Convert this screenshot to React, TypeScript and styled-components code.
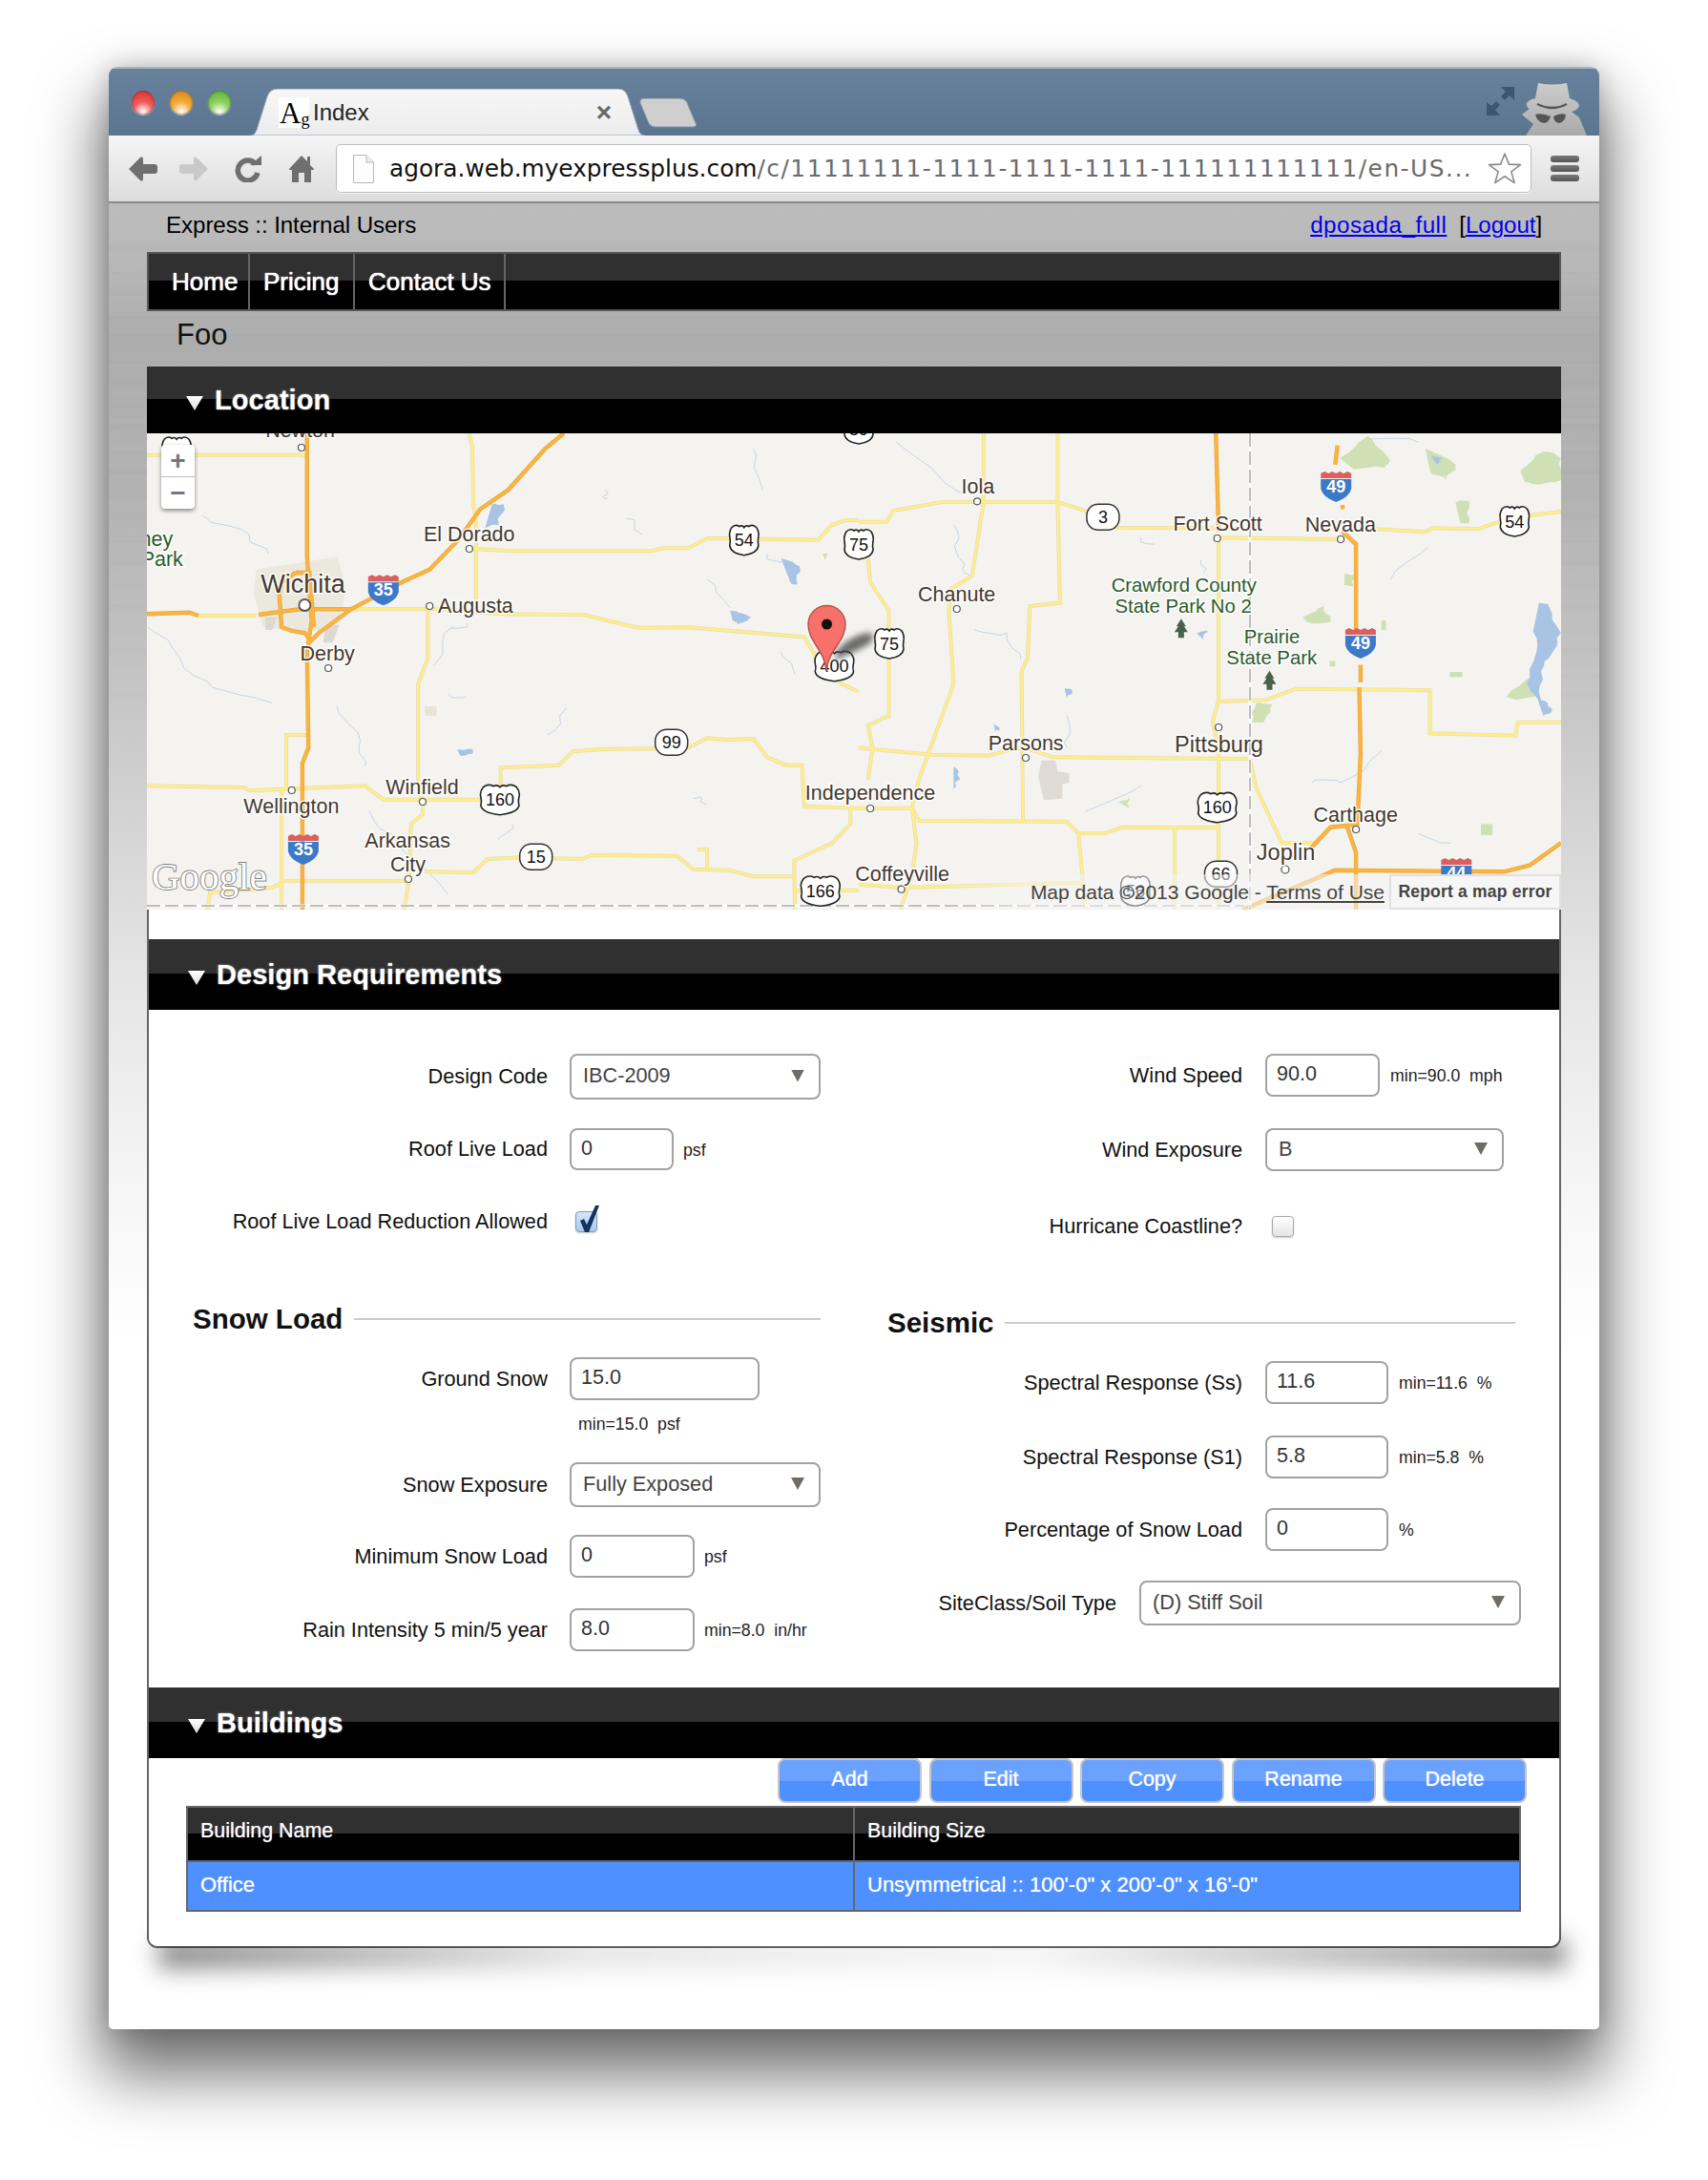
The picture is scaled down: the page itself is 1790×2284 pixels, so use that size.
import React from "react";
import styled, { createGlobalStyle } from "styled-components";

const Global = createGlobalStyle`
  html, body { margin: 0; padding: 0; background: #fff; }
  body { font-family: "Liberation Sans", Arial, sans-serif; color: #000; }
  * { box-sizing: border-box; }
`;

const Page = styled.div`
  width: 1790px;
  height: 2284px;
  padding: 70px 114px 0;
  overflow: hidden;
`;

const Window = styled.div`
  width: 1562px;
  height: 2056px;
  border-radius: 9px 9px 5px 5px;
  box-shadow: 0 40px 66px 8px rgba(0, 0, 0, 0.56), 0 0 26px rgba(0, 0, 0, 0.2);
  background: #fff;
  overflow: hidden;
  display: flex;
  flex-direction: column;
`;

const TitleBar = styled.div`
  height: 72px;
  flex: none;
  display: flex;
  align-items: flex-start;
  background: linear-gradient(#a9b4c0 0 2px, #68829e 2px, #5b7591);
  position: relative;
`;

const Lights = styled.div`
  display: flex;
  gap: 16px;
  padding: 25px 0 0 24px;
`;

const Light = styled.span<{ $c: string; $d: string }>`
  width: 24px;
  height: 25px;
  border-radius: 50%;
  background: radial-gradient(circle at 50% 88%, #fff 0, ${(p) => p.$c} 42%, ${(p) => p.$d} 100%);
  box-shadow: 0 1px 1px rgba(255, 255, 255, 0.5), inset 0 0 2px rgba(0, 0, 0, 0.5);
`;

const Tab = styled.div`
  position: relative;
  width: 413px;
  height: 49px;
  margin: 23px 0 0 21px;
  flex: none;
  display: flex;
  align-items: center;
  padding: 0 35px 0 29px;
  font-size: 24px;
`;

const TabShape = styled.svg`
  position: absolute;
  left: 0;
  top: 0;
  width: 413px;
  height: 49px;
`;

const Favicon = styled.span`
  position: relative;
  width: 32px;
  height: 32px;
  background: #fff;
  margin-right: 4px;
  display: flex;
  align-items: flex-end;
  font-family: "Liberation Serif", serif;
  font-size: 31px;
  line-height: 30px;
  padding-left: 1px;
`;

const FaviconSub = styled.span`
  font-size: 18px;
  line-height: 18px;
`;

const TabTitle = styled.span`
  position: relative;
  flex: 1;
  color: #222;
`;

const TabClose = styled.span`
  position: relative;
  color: #666;
  font-size: 28px;
  font-weight: 700;
`;

const NewTab = styled.svg`
  width: 63px;
  height: 31px;
  margin: 33px 0 0 -7px;
  flex: none;
`;

const TitleIcons = styled.div`
  margin-left: auto;
  display: flex;
  align-items: flex-start;
  padding: 17px 11px 0 0;
  gap: 8px;
`;

const ExpandIcon = styled.svg`
  margin-top: 4px;
`;

const Toolbar = styled.div`
  height: 71px;
  flex: none;
  display: flex;
  align-items: center;
  background: linear-gradient(#f5f5f5, #dcdcdc);
  border-bottom: 2px solid #8a8a8a;
`;

const NavIcon = styled.svg<{ $ml: number }>`
  margin-left: ${(p) => p.$ml}px;
  flex: none;
`;

const Omnibox = styled.div`
  margin-left: 23px;
  width: 1253px;
  height: 51px;
  background: #fff;
  border: 1px solid #bdbdbd;
  border-radius: 5px;
  display: flex;
  align-items: center;
  padding: 0 9px 0 17px;
  box-shadow: 0 1px 0 rgba(255, 255, 255, 0.7);
`;

const UrlText = styled.span`
  margin-left: 16px;
  flex: 1;
  white-space: nowrap;
  font-family: "DejaVu Sans", sans-serif;
  font-size: 24.8px;
  color: #111;
`;

const UrlRest = styled.span`
  color: #6b6b6b;
  letter-spacing: 1.52px;
`;

const MenuButton = styled.div`
  margin-left: 20px;
  width: 30px;
  display: flex;
  flex-direction: column;
  gap: 3px;
`;

const MenuBar = styled.span`
  height: 7px;
  border-radius: 3px;
  background: linear-gradient(#7b7b7b, #555);
`;

const Metal = styled.div`
  flex: 1;
  padding: 0 40px;
  display: flex;
  flex-direction: column;
  background:
    repeating-linear-gradient(0deg, rgba(255, 255, 255, 0.02) 0 4px, transparent 4px 13px, rgba(255, 255, 255, 0.012) 13px 15px, transparent 15px 29px) 0 0 / 100% 520px no-repeat,
    repeating-linear-gradient(0deg, rgba(0, 0, 0, 0.012) 0 7px, transparent 7px 23px, rgba(0, 0, 0, 0.01) 23px 26px, transparent 26px 47px) 0 0 / 100% 520px no-repeat,
    linear-gradient(#bcbcbc 0, #b8b8b8 60px, #adadad 140px, #b2b2b2 300px, #c6c6c6 520px, #e4e4e4 800px, #f7f7f7 1050px, #fff 1200px);
`;

const TopRow = styled.div`
  height: 51px;
  padding: 0 20px 5px 20px;
  display: flex;
  justify-content: space-between;
  align-items: center;
  font-size: 24.2px;
  letter-spacing: -0.1px;
`;

const UserLinks = styled.div`
  display: flex;
  gap: 13px;
`;

const Link = styled.a<{ $spread?: boolean }>`
  color: #0000ee;
  text-decoration: underline;
  letter-spacing: ${(p) => (p.$spread ? "0.5px" : "inherit")};
`;

const NavBar = styled.nav`
  height: 62px;
  border: 2px solid #555;
  display: flex;
  background: linear-gradient(#303030 0 28px, #000 28px);
`;

const NavItem = styled.a<{ $w: number; $pl: number }>`
  width: ${(p) => p.$w}px;
  padding-left: ${(p) => p.$pl}px;
  border-right: 2px solid #666;
  color: #fff;
  font-size: 26px;
  display: flex;
  align-items: center;
  text-shadow: 0 0 1px #fff, 0 0 1px #fff;
`;

const PageTitle = styled.h1`
  height: 58px;
  margin: 0;
  padding: 0 0 8px 31px;
  display: flex;
  align-items: center;
  font-size: 31px;
  font-weight: 400;
  color: #111;
`;

const SectionHeader = styled.div<{ $split: number; $h: number; $pad: number }>`
  height: ${(p) => p.$h}px;
  flex: none;
  display: flex;
  align-items: center;
  padding: 0 0 0 ${(p) => p.$pad}px;
  gap: 12px;
  background: linear-gradient(#303030 0 ${(p) => p.$split}px, #000 ${(p) => p.$split}px);
  color: #fff;
  font-size: 29px;
  font-weight: 700;
  letter-spacing: 0.05px;
  text-shadow: 0 0 2px rgba(255, 255, 255, 0.7);
`;

const Triangle = styled.span`
  width: 18px;
  height: 15px;
  margin-top: 7px;
  background: linear-gradient(#fff, #ddd);
  clip-path: polygon(0 0, 100% 0, 50% 100%);
`;

const MapFrame = styled.div`
  position: relative;
  height: 499px;
  flex: none;
  overflow: hidden;
  background: #f4f3ef;
`;

const MapSvg = styled.svg`
  display: block;
`;

const MapLabel = styled.text<{ $park?: boolean; $size?: number }>`
  font-family: "Liberation Sans", Arial, sans-serif;
  font-size: ${(p) => p.$size || 21.5}px;
  fill: ${(p) => (p.$park ? "#2c5a2e" : "#45392f")};
  stroke: rgba(255, 255, 255, 0.85);
  stroke-width: 3px;
  paint-order: stroke;
`;

const ShieldText = styled.text<{ $c?: string; $b?: boolean }>`
  font-family: "Liberation Sans", Arial, sans-serif;
  font-size: 18px;
  font-weight: ${(p) => (p.$b ? 700 : 400)};
  fill: ${(p) => p.$c || "#111"};
  text-anchor: middle;
`;

const GoogleMark = styled.text`
  font-family: "Liberation Serif", serif;
  font-size: 41px;
  fill: #fff;
  stroke: #808080;
  stroke-width: 1.8px;
  paint-order: stroke;
`;

const ZoomControl = styled.div`
  position: absolute;
  left: 15px;
  top: 12px;
  width: 35px;
  height: 67px;
  background: #fff;
  border-radius: 4px;
  box-shadow: 0 2px 4px rgba(0, 0, 0, 0.45);
  display: flex;
  flex-direction: column;
  color: #777;
  font-size: 28px;
  font-weight: 700;
`;

const ZoomKey = styled.span<{ $top?: boolean }>`
  flex: 1;
  display: flex;
  align-items: center;
  justify-content: center;
  line-height: 1;
  border-bottom: ${(p) => (p.$top ? "1px solid #bbb" : "none")};
`;

const Attribution = styled.div`
  position: absolute;
  right: 0;
  bottom: 0;
  height: 37px;
  width: 640px;
  display: flex;
  justify-content: flex-end;
  align-items: center;
  background: linear-gradient(90deg, rgba(245, 245, 245, 0), rgba(245, 245, 245, 0.55) 12%);
  font-size: 21px;
  color: #444;
`;

const TermsLink = styled.span`
  text-decoration: underline;
`;

const ReportBox = styled.div`
  margin-left: 5px;
  width: 180px;
  height: 37px;
  display: flex;
  align-items: center;
  justify-content: center;
  background: #f6f6f6;
  border: 2px solid #e0e0e0;
  font-size: 17.5px;
  font-weight: 700;
  letter-spacing: 0.2px;
  color: #444;
`;

const Panel = styled.section`
  position: relative;
  height: 1088px;
  flex: none;
  padding-top: 31px;
  background: #fff;
  border: 2px solid #666;
  border-top: none;
  border-radius: 0 0 11px 11px;
  display: flex;
  flex-direction: column;

  &::after {
    content: "";
    position: absolute;
    left: 10px;
    right: -8px;
    bottom: -24px;
    height: 32px;
    z-index: 0;
    filter: blur(12px);
    background: linear-gradient(90deg, rgba(0, 0, 0, 0.46), rgba(0, 0, 0, 0.1) 30%, rgba(0, 0, 0, 0.04) 62%, rgba(0, 0, 0, 0.42));
  }
`;

const PanelInner = styled.div`
  position: relative;
  z-index: 1;
  flex: 1;
  display: flex;
  flex-direction: column;
  background: #fff;
  border-radius: 0 0 9px 9px;
`;

const FormGrid = styled.div`
  height: 710px;
  flex: none;
  display: grid;
  grid-template-columns: 734px 1fr;
  font-size: 21.7px;
`;

const FormColumn = styled.div`
  padding-top: 46px;
  display: flex;
  flex-direction: column;
`;

const FieldRow = styled.div<{ $mt?: number; $labelW: number; $gap?: number; $h?: number }>`
  margin-top: ${(p) => p.$mt || 0}px;
  min-height: ${(p) => p.$h || 44}px;
  display: grid;
  grid-template-columns: ${(p) => p.$labelW}px auto 1fr;
  column-gap: ${(p) => p.$gap || 24}px;
  align-items: center;
`;

const FieldLabel = styled.label`
  text-align: right;
  white-space: nowrap;
  color: #111;
`;

const TextInput = styled.input<{ $w: number; $h?: number }>`
  width: ${(p) => p.$w}px;
  height: ${(p) => p.$h || 45}px;
  padding: 0 0 2px 10px;
  border: 2px solid #a2a2a2;
  border-radius: 8px;
  background: #fff;
  font-family: inherit;
  font-size: 21.5px;
  color: #333;
  outline: none;
`;

const SelectBox = styled.div<{ $w: number; $h?: number }>`
  width: ${(p) => p.$w}px;
  height: ${(p) => p.$h || 47}px;
  padding: 0 15px 2px 12px;
  border: 2px solid #a2a2a2;
  border-radius: 8px;
  display: flex;
  justify-content: space-between;
  align-items: center;
  color: #444;
`;

const SelectArrow = styled.span`
  width: 14px;
  height: 13px;
  background: #716b66;
  clip-path: polygon(0 0, 100% 0, 50% 100%);
`;

const Unit = styled.span`
  margin: 2px 0 0 -13px;
  font-size: 17.7px;
  white-space: pre;
  color: #222;
`;

const Hint = styled.div`
  margin: 13px 0 0 450px;
  height: 24px;
  line-height: 24px;
  font-size: 17.7px;
  white-space: pre;
  color: #222;
`;

const CheckBoxWrap = styled.span<{ $ml: number }>`
  position: relative;
  display: block;
  margin-left: ${(p) => p.$ml}px;
  width: 23px;
  height: 22px;
  border-radius: 4px;
  border: 1px solid #a8a8a8;
  background: linear-gradient(#fff, #e4e4e4);
  box-shadow: 0 1px 2px rgba(0, 0, 0, 0.2);
`;

const CheckedBox = styled(CheckBoxWrap)`
  border-color: #7f98b8;
  background: linear-gradient(#d6e6f8, #a9c9ee);
`;

const CheckMark = styled.svg`
  position: absolute;
  left: 1px;
  top: -8px;
`;

const GroupHeading = styled.div<{ $mt: number; $pl: number; $end: number; $gap: number }>`
  margin-top: ${(p) => p.$mt}px;
  height: 40px;
  padding-left: ${(p) => p.$pl}px;
  width: ${(p) => p.$end}px;
  display: flex;
  align-items: center;
  gap: ${(p) => p.$gap}px;
  font-size: 29.5px;
  font-weight: 700;
  color: #111;
`;

const HeadingRule = styled.span`
  flex: 1;
  height: 2px;
  background: #cbcbcb;
`;

const Actions = styled.div`
  height: 47px;
  flex: none;
  padding-right: 34px;
  display: flex;
  justify-content: flex-end;
  gap: 7.5px;
`;

const ActionButton = styled.button`
  width: 151px;
  height: 47px;
  padding: 0 0 3px;
  border: 2px solid #c6c6c6;
  border-radius: 8px;
  background: linear-gradient(#6ca2ff 0 22px, #4e90ff 22px);
  color: #fff;
  font-family: inherit;
  font-size: 21.5px;
  text-shadow: 0 0 1px rgba(255, 255, 255, 0.8);
`;

const Table = styled.table`
  margin: 3px 0 0 39px;
  width: 1399px;
  border-collapse: collapse;
  table-layout: fixed;
  font-size: 21.4px;
  color: #fff;
  text-shadow: 0 0 1px rgba(255, 255, 255, 0.7);
`;

const HeadCell = styled.th<{ $w?: number }>`
  width: ${(p) => (p.$w ? `${p.$w}px` : "auto")};
  height: 57px;
  padding: 0 0 6px 13px;
  border: 2px solid #666;
  text-align: left;
  font-weight: 400;
  background: linear-gradient(#303030 0 27px, #000 27px);
`;

const BodyCell = styled.td`
  height: 52px;
  padding: 0 0 3px 13px;
  border: 2px solid #666;
  background: #4e90ff;
  font-size: 22px;
`;

type Conv = (x: number, y: number) => [number, number];
const z3: Conv = (x, y) => [x / 2.063 - 14, y / 3 - 4];
const z4: Conv = (x, y) => [746 + x / 2.063, y / 3 - 4];
const pts = (fn: Conv, s: string) =>
  s
    .split(" ")
    .map((p) => {
      const [x, y] = p.split(",").map(Number);
      const [a, b] = fn(x, y);
      return `${a.toFixed(1)},${b.toFixed(1)}`;
    })
    .join(" ");

// rivers and lake shores are irregular, so break straight segments up a bit
const wiggle = (s: string, amp: number) => {
  const p = s.split(" ").map((q) => q.split(",").map(Number));
  const out: string[] = [];
  p.forEach(([x, y], i) => {
    out.push(`${x},${y}`);
    const next = p[i + 1];
    if (!next) return;
    [0.25, 0.5, 0.75].forEach((t) => {
      const dx = Math.sin(i * 7.3 + t * 19 + x) * amp;
      const dy = Math.cos(i * 3.1 + t * 23 + y) * amp;
      out.push(`${(x + (next[0] - x) * t + dx).toFixed(1)},${(y + (next[1] - y) * t + dy).toFixed(1)}`);
    });
  });
  return out.join(" ");
};
const riv = (fn: Conv, s: string) => pts(fn, wiggle(s, 9));
const shore = (fn: Conv, s: string) => pts(fn, wiggle(s, 5));

const yellowRoads = [
  pts(z3, "29,80 360,80 375,85"),
  pts(z3, "725,12 732,50 735,240 740,280 740,560"),
  pts(z3, "735,375 820,382 1120,382 1145,373 1200,373 1240,342 1480,347 1510,300 1540,285 1568,285"),
  pts(z3, "470,565 640,563 800,580 975,583 1090,623 1200,622 1450,652 1490,750 1525,795 1568,825"),
  pts(z3, "140,585 265,585"),
  pts(z3, "636,565 636,720 615,800 615,1100 625,1170 625,1210 600,1240 595,1420 585,1510"),
  pts(z3, "29,1120 240,1125 250,1135 500,1120 540,1163 750,1163"),
  pts(z3, "795,1163 793,1063 920,1055 950,1012 1010,1005 1130,1003 1200,1000 1240,970 1280,975 1340,972 1370,1030 1410,1055 1445,1055 1450,1185 1568,1190"),
  pts(z3, "330,1130 330,960 375,960"),
  pts(z3, "320,1130 320,1510"),
  pts(z3, "320,1418 590,1418"),
  pts(z3, "160,1510 165,1455 300,1440 320,1425"),
  pts(z3, "630,1390 735,1392 765,1350 840,1345 905,1348 970,1350 990,1338 1175,1340 1210,1382 1290,1385 1340,1405 1425,1405"),
  pts(z3, "1220,1320 1240,1320 1240,1382"),
  pts(z3, "1430,1510 1428,1355 1510,1300 1550,1240 1550,1190"),
  pts(z3, "1430,1450 1568,1448"),
  pts(z4, "0,290 60,290 75,255 180,228 430,228 490,255 560,308 775,310"),
  pts(z4, "775,340 1040,345"),
  pts(z4, "1110,312 1225,322 1240,310 1340,312 1385,290 1450,270 1518,258"),
  pts(z4, "270,12 270,230 265,270 245,460 200,500 195,570 205,800 130,1100 115,1190 125,1300 115,1400 90,1510"),
  pts(z4, "430,12 430,230 435,545 370,555 365,720 352,760 355,1230"),
  pts(z4, "778,340 778,850 765,920 778,1000 778,1510"),
  pts(z4, "780,855 880,850 945,815 1170,818 1235,820 1235,955 1420,962 1425,920 1518,920"),
  pts(z4, "0,1000 30,1005 160,1022 280,1025 330,1005 360,1000 420,1030 845,1035"),
  pts(z4, "845,1035 860,1130 915,1300 985,1300"),
  pts(z4, "0,1190 115,1190 130,1230 450,1232 475,1270 530,1270 570,1250 775,1252"),
  pts(z4, "475,1270 490,1510"),
  pts(z4, "683,1252 683,1510"),
  pts(z4, "20,405 25,480 65,570 65,900 20,930 30,1000 20,1100"),
  pts(z4, "0,1430 90,1440 480,1425"),
];

const orangeRoads = [
  pts(z3, "375,12 375,400 385,600 375,700 378,1000 365,1050 365,1510"),
  pts(z3, "930,12 890,60 810,190 750,250 700,350 640,440 580,480 470,565 400,640 380,670"),
  pts(z3, "29,580 120,575 140,585"),
  pts(z3, "270,582 360,565 470,565"),
  pts(z3, "350,450 320,480 315,520 320,620 340,632 370,640 385,665"),
  pts(z3, "350,450 380,450 390,620"),
  pts(z4, "772,12 778,320"),
  pts(z4, "1035,50 1030,110"),
  pts(z4, "1045,238 1047,250"),
  pts(z4, "1045,320 1075,360 1075,630"),
  pts(z4, "1085,740 1085,795"),
  pts(z4, "1082,810 1085,1020 1078,1240 1055,1245 1075,1330 1075,1510"),
  pts(z4, "975,1320 1020,1250 1055,1245"),
  pts(z4, "830,1510 1030,1385 1395,1390 1450,1370 1518,1300"),
];

const rivers = [
  riv(z3, "150,270 250,330 290,390"),
  riv(z3, "30,620 100,720 170,810 300,860"),
  riv(z3, "440,870 490,980 500,1060"),
  riv(z3, "935,875 895,960"),
  riv(z3, "1020,190 1024,215"),
  riv(z3, "1340,60 1360,190"),
  riv(z3, "1065,280 1100,330"),
  riv(z3, "1240,470 1290,560"),
  riv(z3, "1370,390 1400,420"),
  riv(z3, "650,740 690,620 720,610"),
  riv(z3, "510,1200 570,1300 680,1460"),
  riv(z3, "820,1240 790,1290"),
  riv(z3, "1210,1160 1240,1180"),
  riv(z3, "1400,700 1430,770"),
  riv(z3, "680,830 720,840"),
  riv(z4, "80,40 220,200"),
  riv(z4, "205,300 215,400 245,460"),
  riv(z4, "250,630 320,640 350,720"),
  riv(z4, "610,340 640,360"),
  riv(z4, "740,410 745,450"),
  riv(z4, "450,900 450,1000"),
  riv(z4, "490,1200 610,1120"),
  riv(z4, "980,1110 1040,1110 1130,1010"),
  riv(z4, "1150,470 1230,370"),
  riv(z4, "1100,30 1210,40"),
  riv(z4, "1210,1270 1280,1300"),
];

const lakes = [
  shore(z3, "775,235 800,235 790,300 760,310"),
  shore(z3, "1400,405 1440,430 1435,485 1420,480"),
  shore(z3, "1290,570 1335,590 1310,610 1295,600"),
  shore(z3, "700,1005 740,1005 725,1020 705,1022"),
  shore(z4, "1470,550 1490,550 1518,640 1500,700 1475,760 1475,850 1500,880 1480,900 1445,800 1465,700 1460,620"),
  shore(z4, "205,1060 220,1100 205,1130"),
  shore(z4, "290,910 305,950 295,950"),
  shore(z4, "730,640 755,635 745,660"),
  shore(z4, "445,815 462,825 450,845"),
  shore(z4, "1232,70 1262,90 1250,110"),
];

const greens = [
  shore(z4, "1040,90 1100,20 1145,90 1140,120 1070,125"),
  shore(z4, "1225,60 1290,110 1270,160 1235,130"),
  shore(z4, "1290,230 1320,225 1320,290 1300,290"),
  shore(z4, "1430,130 1480,70 1518,90 1518,160 1480,170 1440,165"),
  shore(z4, "960,590 1005,555 1020,605 970,605"),
  shore(z4, "1050,455 1070,455 1070,490 1050,490"),
  shore(z4, "850,920 860,860 895,860 875,920"),
  pts(z4, "1278,762 1305,762 1305,778 1278,778"),
  pts(z4, "1345,1240 1370,1240 1370,1275 1345,1275"),
  shore(z4, "1400,840 1450,780 1470,830 1420,850"),
  shore(z4, "560,1170 585,1155 585,1190"),
  pts(z4, "1130,600 1140,600 1140,630 1130,630"),
  pts(z4, "1018,728 1030,728 1030,745 1018,745"),
  pts(z3, "1490,390 1500,390 1495,410"),
];

const urban = [
  { p: pts(z3, "265,440 440,400 460,500 440,620 360,640 280,620 260,520"), c: "#ebe8dd" },
  { p: pts(z3, "285,590 310,590 300,630 285,630"), c: "#dcd9d2" },
  { p: pts(z3, "415,615 445,615 430,670 410,670"), c: "#dcd9d2" },
  { p: pts(z3, "630,870 655,870 655,900 630,900"), c: "#e8e3d6" },
  { p: pts(z4, "395,1040 425,1040 430,1075 455,1080 455,1110 440,1115 440,1160 400,1165 388,1090"), c: "#dfdad4" },
];

const dots: [Conv, number, number, number][] = [
  [z3, 363, 57, 3.5], [z3, 726, 375, 3.5], [z3, 640, 555, 3.5], [z3, 370, 552, 6], [z3, 421, 750, 3.5],
  [z3, 342, 1134, 3.5], [z3, 625, 1170, 3.5], [z3, 594, 1413, 3.5], [z4, 256, 226, 3.5], [z4, 775, 342, 3.5],
  [z4, 1042, 345, 3.5], [z4, 212, 564, 3.5], [z4, 778, 936, 3.5], [z4, 361, 1032, 3.5], [z4, 25, 1191, 3.5],
  [z4, 1075, 1257, 3.5], [z4, 922, 1383, 4], [z4, 92, 1445, 3.5],
];

const labels: { f: Conv; x: number; y: number; t: string; park?: boolean; size?: number; end?: boolean }[] = [
  { f: z3, x: 285, y: 25, t: "Newton" },
  { f: z3, x: 85, y: 365, t: "ney", park: true, end: true },
  { f: z3, x: 107, y: 430, t: "Park", park: true, end: true },
  { f: z3, x: 627, y: 350, t: "El Dorado" },
  { f: z3, x: 275, y: 512, t: "Wichita", size: 27 },
  { f: z3, x: 658, y: 577, t: "Augusta" },
  { f: z3, x: 360, y: 725, t: "Derby" },
  { f: z3, x: 545, y: 1145, t: "Winfield" },
  { f: z3, x: 238, y: 1205, t: "Wellington" },
  { f: z3, x: 500, y: 1315, t: "Arkansas" },
  { f: z3, x: 555, y: 1390, t: "City" },
  { f: z3, x: 1452, y: 1165, t: "Independence" },
  { f: z4, x: 196, y: 1420, t: "Coffeyville", end: true },
  { f: z4, x: 222, y: 200, t: "Iola" },
  { f: z4, x: 680, y: 317, t: "Fort Scott" },
  { f: z4, x: 965, y: 320, t: "Nevada" },
  { f: z4, x: 128, y: 540, t: "Chanute" },
  { f: z4, x: 546, y: 510, t: "Crawford County", park: true, size: 20.3 },
  { f: z4, x: 554, y: 577, t: "State Park No 2", park: true, size: 20.3 },
  { f: z4, x: 833, y: 672, t: "Prairie", park: true, size: 20.3 },
  { f: z4, x: 795, y: 738, t: "State Park", park: true, size: 20.3 },
  { f: z4, x: 280, y: 1008, t: "Parsons" },
  { f: z4, x: 683, y: 1015, t: "Pittsburg", size: 23.5 },
  { f: z4, x: 983, y: 1232, t: "Carthage" },
  { f: z4, x: 860, y: 1352, t: "Joplin", size: 23.5 },
];

const usShields: [Conv, number, number, string][] = [
  [z3, 93, 70, ""], [z3, 1320, 347, "54"], [z3, 1515, 743, "400"], [z3, 792, 1163, "160"], [z3, 1485, 1450, "166"],
  [z4, 0, 360, "75"], [z4, 1418, 288, "54"], [z4, 66, 672, "75"], [z4, 775, 1187, "160"], [z4, 598, 1450, "56"],
  [z4, 0, -3, "59"],
];
const roundShields: [Conv, number, number, string][] = [
  [z3, 1163, 983, "99"], [z3, 870, 1343, "15"], [z4, 528, 275, "3"], [z4, 783, 1397, "66"],
];
const interstates: [Conv, number, number, string][] = [
  [z3, 540, 505, "35"], [z3, 367, 1320, "35"], [z4, 1032, 180, "49"], [z4, 1085, 672, "49"], [z4, 1292, 1395, "44"],
];

const UsShield = ({ x, y, t, wide }: { x: number; y: number; t: string; wide?: boolean }) => (
  <g transform={`translate(${x.toFixed(1)} ${y.toFixed(1)})`}>
    <path
      transform={wide ? "scale(1.34 1)" : undefined}
      vectorEffect="non-scaling-stroke"
      d="M-13-13Q-9-17-5-14Q-2-16 0-13Q2-16 5-14Q9-17 13-13Q16-8 15-3Q14 2 15 6Q14 14 0 16Q-14 14-15 6Q-14 2-15-3Q-16-8-13-13Z"
      fill="#fff"
      stroke="#222"
      strokeWidth={1.6}
    />
    <ShieldText y={6.5}>{t}</ShieldText>
  </g>
);

const RoadMap = () => (
  <MapSvg width={1482} height={499} viewBox="0 0 1482 499">
    <defs>
      <filter id="pinBlur" x="-30%" y="-60%" width="160%" height="220%">
        <feGaussianBlur stdDeviation="3" />
      </filter>
    </defs>
    <rect width={1482} height={499} fill="#f4f3ef" />
    {urban.map((u, i) => (
      <polygon key={i} points={u.p} fill={u.c} />
    ))}
    {greens.map((g, i) => (
      <polygon key={i} points={g} fill="#cfe0b4" />
    ))}
    {rivers.map((r, i) => (
      <polyline key={i} points={r} fill="none" stroke="#c3d5ec" strokeWidth={1} />
    ))}
    {lakes.map((l, i) => (
      <polygon key={i} points={l} fill="#a8c3e4" />
    ))}
    {yellowRoads.map((r, i) => (
      <polyline key={i} points={r} fill="none" stroke="#e9deb6" strokeWidth={4} />
    ))}
    {yellowRoads.map((r, i) => (
      <polyline key={i} points={r} fill="none" stroke="#ffee86" strokeWidth={2.4} />
    ))}
    {orangeRoads.map((r, i) => (
      <polyline key={i} points={r} fill="none" stroke="#e8a540" strokeWidth={4.4} />
    ))}
    {orangeRoads.map((r, i) => (
      <polyline key={i} points={r} fill="none" stroke="#fbb53f" strokeWidth={3} />
    ))}
    <line x1={1156} y1={0} x2={1156} y2={499} stroke="#fff" strokeWidth={3} />
    <line x1={1156} y1={0} x2={1156} y2={499} stroke="#a9a9a9" strokeWidth={1.5} strokeDasharray="14 5" />
    <line x1={0} y1={495} x2={1150} y2={495} stroke="#fff" strokeWidth={3} />
    <line x1={0} y1={495} x2={1150} y2={495} stroke="#a9a9a9" strokeWidth={1.5} strokeDasharray="14 5" />
    {dots.map(([f, x, y, r], i) => {
      const [a, b] = f(x, y);
      return <circle key={i} cx={a} cy={b} r={r} fill="#fff" stroke="#555" strokeWidth={r > 4 ? 1.8 : 1.2} />;
    })}
    {labels.map((l, i) => {
      const [a, b] = l.f(l.x, l.y);
      return (
        <MapLabel key={i} x={a} y={b} $park={l.park} $size={l.size} textAnchor={l.end ? "end" : "start"}>
          {l.t}
        </MapLabel>
      );
    })}
    {[z4(697, 625), z4(888, 788)].map(([a, b], i) => (
      <path
        key={i}
        transform={`translate(${a} ${b})`}
        d="M0-10L5-2H3L7 4H3V10H-3V4H-7L-3-2H-5Z"
        fill="#47624a"
      />
    ))}
    {usShields.map(([f, x, y, t], i) => {
      const [a, b] = f(x, y);
      return <UsShield key={i} x={a} y={b} t={t} wide={t.length > 2} />;
    })}
    {roundShields.map(([f, x, y, t], i) => {
      const [a, b] = f(x, y);
      return (
        <g key={i} transform={`translate(${a.toFixed(1)} ${b.toFixed(1)})`}>
          <rect x={-17} y={-13.5} width={34} height={27} rx={12} fill="#fff" stroke="#333" strokeWidth={1.5} />
          <ShieldText y={6.5}>{t}</ShieldText>
        </g>
      );
    })}
    {interstates.map(([f, x, y, t], i) => {
      const [a, b] = f(x, y);
      return (
        <g key={i} transform={`translate(${a.toFixed(1)} ${b.toFixed(1)})`}>
          <path d="M-16-9V-14L-12-16L-8-14L-4-16L0-14L4-16L8-14L12-16L16-14V-9Z" fill="#d9605f" />
          <path d="M-16-8H16V2Q14 11 0 16Q-14 11-16 2Z" fill="#3d79c9" />
          <ShieldText y={6} $c="#fff" $b>{t}</ShieldText>
        </g>
      );
    })}
    <GoogleMark x={5} y={478}>Google</GoogleMark>
    <path d="M724 226Q742 209 759 209Q763 213 758 220Q745 228 720 238Z" fill="#4a4a4a" opacity={0.8} filter="url(#pinBlur)" />
    <path
      d="M712 249C710 226 693 219 693 200A19.500 19.500 0 0 1 732 200C732 219 714 226 712 249Z"
      fill="#f7706a"
      stroke="#b4564c"
      strokeWidth={1.5}
    />
    <circle cx={712.500} cy={200} r={5.500} fill="#111" />
  </MapSvg>
);

const BackArrow = ({ ml, color, flip }: { ml: number; color: string; flip?: boolean }) => (
  <NavIcon $ml={ml} width={31} height={28} viewBox="0 0 31 28">
    <path
      transform={flip ? "translate(31 0) scale(-1 1)" : undefined}
      d="M1 14L13 2Q16 0 16 4V9H28Q31 9 31 12V16Q31 19 28 19H16V24Q16 28 13 26Z"
      fill={color}
    />
  </NavIcon>
);

const App = () => (
  <Page>
    <Global />
    <Window>
      <TitleBar>
        <Lights>
          <Light $c="#f25a58" $d="#c92b2b" />
          <Light $c="#f5ac3a" $d="#d07e14" />
          <Light $c="#8ed35f" $d="#57a632" />
        </Lights>
        <Tab>
          <TabShape viewBox="0 0 413 49">
            <defs>
              <linearGradient id="tabFill" x1="0" y1="0" x2="0" y2="1">
                <stop offset="0" stopColor="#f7f7f7" />
                <stop offset="1" stopColor="#ececec" />
              </linearGradient>
            </defs>
            <path
              d="M0 49Q4 49 6 43L17 8Q20 0 28 0H385Q392 0 395 8L406 43Q408 49 413 49Z"
              fill="url(#tabFill)"
              stroke="#8ea0b4"
              strokeWidth={1}
            />
          </TabShape>
          <Favicon>
            A<FaviconSub>g</FaviconSub>
          </Favicon>
          <TabTitle>Index</TabTitle>
          <TabClose>×</TabClose>
        </Tab>
        <NewTab viewBox="0 0 63 31">
          <path d="M7 0H43Q50 0 52 7L60 26Q62 30 57 30H18Q12 30 10 24L2 5Q1 0 7 0Z" fill="#cfcfcf" stroke="#8295aa" />
        </NewTab>
        <TitleIcons>
          <ExpandIcon width={29} height={30} viewBox="0 0 29 30">
            <path d="M15 0H29V14L24 9L19 14L15 10L20 5Z" fill="#3f556f" />
            <path d="M0 16L5 20L10 15L14 19L9 24L14 30H0Z" fill="#3f556f" />
          </ExpandIcon>
          <svg width={70} height={55} viewBox="0 0 70 55">
            <defs>
              <linearGradient id="spyFill" x1="0" y1="0" x2="0" y2="1">
                <stop offset="0" stopColor="#cdcdcd" />
                <stop offset="1" stopColor="#a9a9a9" />
              </linearGradient>
            </defs>
            <path
              d="M17 0Q32 3 47 0L50 16Q58 18 60 23Q60 28 52 30L60 36L68 55H4L12 43L0 33L8 27Q4 25 5 21Q8 17 14 16Z"
              fill="url(#spyFill)"
            />
            <path d="M16 22Q32 30 47 22" fill="none" stroke="#555" strokeWidth={2.5} />
            <path d="M14 33Q21 31 30 35Q28 42 23 42Q16 41 14 33ZM33 35Q40 31 46 33Q45 41 39 42Q34 42 33 35Z" fill="#555" />
          </svg>
        </TitleIcons>
      </TitleBar>
      <Toolbar>
        <BackArrow ml={20} color="#6f6f6f" />
        <BackArrow ml={23} color="#c9c9c9" flip />
        <NavIcon $ml={27} width={28} height={28} viewBox="0 0 28 28">
          <path d="M22 9A10.500 10.500 0 1 0 24 18" fill="none" stroke="#6f6f6f" strokeWidth={5.500} />
          <path d="M16 10H28V0Z" fill="#6f6f6f" />
        </NavIcon>
        <NavIcon $ml={29} width={26} height={28} viewBox="0 0 26 28">
          <path d="M13 0L19 6V1H22V10L26 14V15H23V28H16V18H10V28H3V15H0V14Z" fill="#6f6f6f" />
        </NavIcon>
        <Omnibox>
          <svg width={22} height={30} viewBox="0 0 22 30">
            <path d="M.5.500H14L21.500 8V29.500H.5Z" fill="#fdfdfd" stroke="#b9b9b9" />
            <path d="M14 .500V8H21.500" fill="#eee" stroke="#b9b9b9" />
          </svg>
          <UrlText>
            agora.web.myexpressplus.com
            <UrlRest>/c/11111111-1111-1111-1111-111111111111/en-US...</UrlRest>
          </UrlText>
          <svg width={36} height={35} viewBox="0 0 37 35">
            <polygon
              points="18.500,1.500 23,13 35.500,13.500 25.500,21 29,33 18.500,26 8,33 11.500,21 1.500,13.500 14,13"
              fill="#fff"
              stroke="#8a8a8a"
              strokeWidth={1.6}
              strokeLinejoin="round"
            />
          </svg>
        </Omnibox>
        <MenuButton>
          <MenuBar />
          <MenuBar />
          <MenuBar />
        </MenuButton>
      </Toolbar>
      <Metal>
        <TopRow>
          <span>Express :: Internal Users</span>
          <UserLinks>
            <Link $spread>dposada_full</Link>
            <span>
              [<Link>Logout</Link>]
            </span>
          </UserLinks>
        </TopRow>
        <NavBar>
          <NavItem $w={106} $pl={24}>Home</NavItem>
          <NavItem $w={110} $pl={14}>Pricing</NavItem>
          <NavItem $w={158} $pl={14}>Contact Us</NavItem>
        </NavBar>
        <PageTitle>Foo</PageTitle>
        <SectionHeader $h={70} $split={34} $pad={41}>
          <Triangle />
          Location
        </SectionHeader>
        <MapFrame>
          <RoadMap />
          <ZoomControl>
            <ZoomKey $top>+</ZoomKey>
            <ZoomKey>−</ZoomKey>
          </ZoomControl>
          <Attribution>
            <span>
              Map data ©2013 Google - <TermsLink>Terms of Use</TermsLink>
            </span>
            <ReportBox>Report a map error</ReportBox>
          </Attribution>
        </MapFrame>
        <Panel>
          <PanelInner>
            <SectionHeader $h={74} $split={36} $pad={41}>
              <Triangle />
              Design Requirements
            </SectionHeader>
            <FormGrid>
              <FormColumn>
                <FieldRow $labelW={418} $gap={23} $h={48}>
                  <FieldLabel>Design Code</FieldLabel>
                  <SelectBox $w={263} $h={48}>
                    IBC-2009
                    <SelectArrow />
                  </SelectBox>
                </FieldRow>
                <FieldRow $labelW={418} $gap={23} $mt={30}>
                  <FieldLabel>Roof Live Load</FieldLabel>
                  <TextInput $w={109} $h={44} readOnly defaultValue="0" />
                  <Unit>psf</Unit>
                </FieldRow>
                <FieldRow $labelW={418} $gap={23} $mt={32}>
                  <FieldLabel>Roof Live Load Reduction Allowed</FieldLabel>
                  <CheckedBox $ml={6}>
                    <CheckMark width={24} height={30} viewBox="0 0 24 30">
                      <path d="M3 17L7 15L10 21L19 1L23 1L12 29H8Z" fill="#10335f" />
                    </CheckMark>
                  </CheckedBox>
                </FieldRow>
                <GroupHeading $mt={60} $pl={46} $end={704} $gap={12}>
                  Snow Load
                  <HeadingRule />
                </GroupHeading>
                <FieldRow $labelW={418} $gap={23} $mt={20} $h={45}>
                  <FieldLabel>Ground Snow</FieldLabel>
                  <TextInput $w={199} readOnly defaultValue="15.0" />
                </FieldRow>
                <Hint>min=15.0  psf</Hint>
                <FieldRow $labelW={418} $gap={23} $mt={28} $h={47}>
                  <FieldLabel>Snow Exposure</FieldLabel>
                  <SelectBox $w={263}>
                    Fully Exposed
                    <SelectArrow />
                  </SelectBox>
                </FieldRow>
                <FieldRow $labelW={418} $gap={23} $mt={29} $h={45}>
                  <FieldLabel>Minimum Snow Load</FieldLabel>
                  <TextInput $w={131} readOnly defaultValue="0" />
                  <Unit>psf</Unit>
                </FieldRow>
                <FieldRow $labelW={418} $gap={23} $mt={32} $h={45}>
                  <FieldLabel>Rain Intensity 5 min/5 year</FieldLabel>
                  <TextInput $w={131} readOnly defaultValue="8.0" />
                  <Unit>min=8.0  in/hr</Unit>
                </FieldRow>
              </FormColumn>
              <FormColumn>
                <FieldRow $labelW={412} $h={45}>
                  <FieldLabel>Wind Speed</FieldLabel>
                  <TextInput $w={120} readOnly defaultValue="90.0" />
                  <Unit>min=90.0  mph</Unit>
                </FieldRow>
                <FieldRow $labelW={412} $mt={33} $h={45}>
                  <FieldLabel>Wind Exposure</FieldLabel>
                  <SelectBox $w={250} $h={45}>
                    B
                    <SelectArrow />
                  </SelectBox>
                </FieldRow>
                <FieldRow $labelW={412} $mt={36}>
                  <FieldLabel>Hurricane Coastline?</FieldLabel>
                  <CheckBoxWrap $ml={7} />
                </FieldRow>
                <GroupHeading $mt={59} $pl={40} $end={698} $gap={11}>
                  Seismic
                  <HeadingRule />
                </GroupHeading>
                <FieldRow $labelW={412} $mt={20} $h={45}>
                  <FieldLabel>Spectral Response (Ss)</FieldLabel>
                  <TextInput $w={129} readOnly defaultValue="11.6" />
                  <Unit>min=11.6  %</Unit>
                </FieldRow>
                <FieldRow $labelW={412} $mt={33} $h={45}>
                  <FieldLabel>Spectral Response (S1)</FieldLabel>
                  <TextInput $w={129} readOnly defaultValue="5.8" />
                  <Unit>min=5.8  %</Unit>
                </FieldRow>
                <FieldRow $labelW={412} $mt={31} $h={45}>
                  <FieldLabel>Percentage of Snow Load</FieldLabel>
                  <TextInput $w={129} readOnly defaultValue="0" />
                  <Unit>%</Unit>
                </FieldRow>
                <FieldRow $labelW={280} $mt={31} $h={47}>
                  <FieldLabel>SiteClass/Soil Type</FieldLabel>
                  <SelectBox $w={400}>
                    (D) Stiff Soil
                    <SelectArrow />
                  </SelectBox>
                </FieldRow>
              </FormColumn>
            </FormGrid>
            <SectionHeader $h={74} $split={36} $pad={41}>
              <Triangle />
              Buildings
            </SectionHeader>
            <Actions>
              {["Add", "Edit", "Copy", "Rename", "Delete"].map((b) => (
                <ActionButton key={b}>{b}</ActionButton>
              ))}
            </Actions>
            <Table>
              <thead>
                <tr>
                  <HeadCell $w={699}>Building Name</HeadCell>
                  <HeadCell>Building Size</HeadCell>
                </tr>
              </thead>
              <tbody>
                <tr>
                  <BodyCell>Office</BodyCell>
                  <BodyCell>Unsymmetrical :: 100'-0" x 200'-0" x 16'-0"</BodyCell>
                </tr>
              </tbody>
            </Table>
          </PanelInner>
        </Panel>
      </Metal>
    </Window>
  </Page>
);

export default App;
